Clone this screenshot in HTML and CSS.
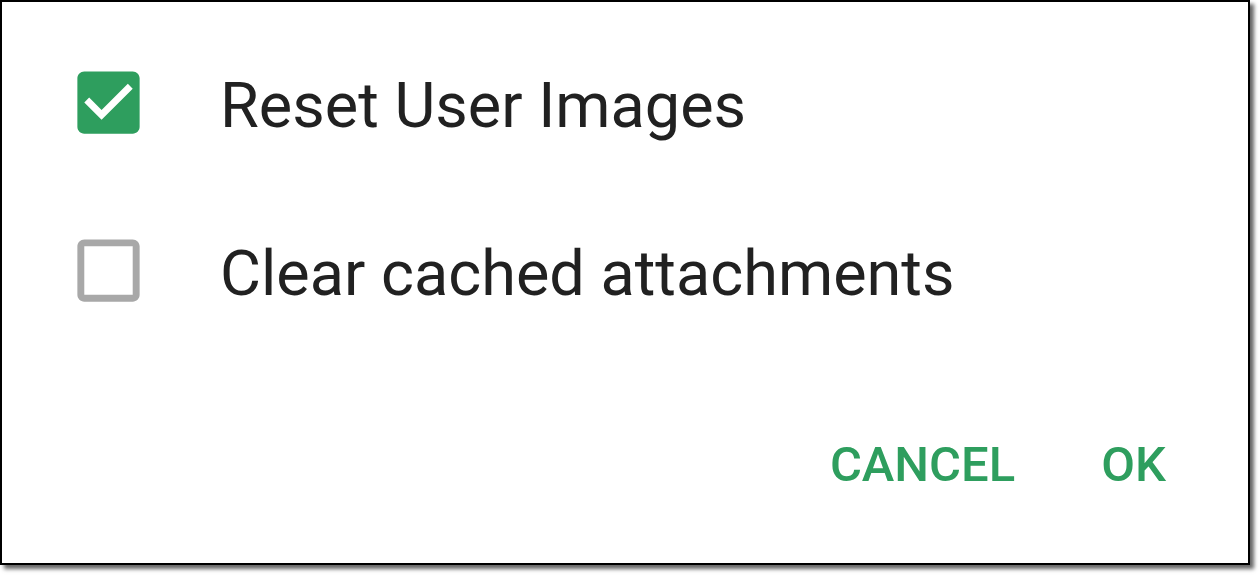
FILE: index.html
```html
<!DOCTYPE html>
<html lang="en">
<head>
    <meta charset="UTF-8">
    <title>Clear data</title>
    <link rel="stylesheet" href="styles.css">
</head>
<body>
    <div class="dialog">
        <div class="options">
            <label class="option">
                <svg class="box checked" viewBox="0 0 24 24">
                    <path d="M19 3H5c-1.11 0-2 .9-2 2v14c0 1.1.89 2 2 2h14c1.11 0 2-.9 2-2V5c0-1.1-.89-2-2-2zm-9 14l-5-5 1.41-1.41L10 14.17l7.59-7.59L19 8l-9 9z"/>
                </svg>
                <span>Reset User Images</span>
            </label>
            <label class="option">
                <svg class="box" viewBox="0 0 24 24">
                    <path d="M19 5v14H5V5h14m0-2H5c-1.1 0-2 .9-2 2v14c0 1.1.9 2 2 2h14c1.1 0 2-.9 2-2V5c0-1.1-.9-2-2-2z"/>
                </svg>
                <span>Clear cached attachments</span>
            </label>
        </div>
        <div class="actions">
            <button>CANCEL</button>
            <button>OK</button>
        </div>
    </div>
</body>
</html>
```
FILE: styles.css
```css
body {
    margin: 0;
    height: 576px;
    background-color: #fff;
    font-family: Roboto, "Noto Sans", sans-serif;
}
.dialog {
    box-sizing: border-box;
    width: 1250px;
    height: 565px;
    border: 2px solid #000;
    background-color: #fff;
    box-shadow: 4px 4px 4px rgba(0, 0, 0, 0.6);
    display: flex;
    flex-direction: column;
}
.options {
    padding: 59px 0 0 65px;
    display: flex;
    flex-direction: column;
    gap: 85px;
}
.option {
    display: flex;
    align-items: center;
    gap: 70px;
    font-size: 63px;
    color: #212121;
}
.option span {
    padding-top: 6px;
}
.box {
    width: 83px;
    height: 83px;
    fill: #a8a8a8;
    flex-shrink: 0;
}
.box.checked {
    fill: #2e9e5e;
}
.actions {
    margin-top: auto;
    display: flex;
    justify-content: flex-end;
    gap: 86px;
    padding: 0 82px 70px 0;
}
.actions button {
    background: none;
    border: none;
    padding: 0;
    font-family: Roboto, "Noto Sans", sans-serif;
    font-weight: 500;
    font-size: 49px;
    color: #2e9e5e;
}
```
